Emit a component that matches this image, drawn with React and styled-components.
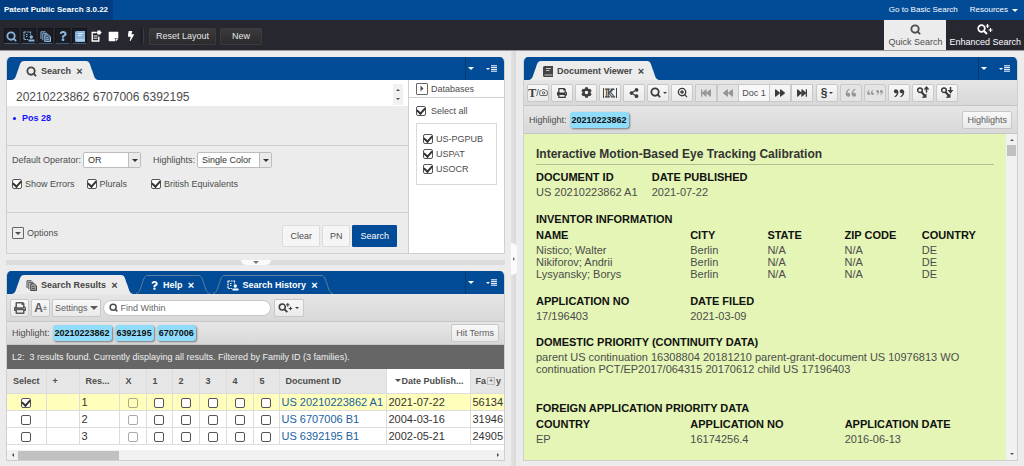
import React from 'react';
import styled, { createGlobalStyle, css } from 'styled-components';
import {
  FaBackward,
  FaBolt,
  FaCog,
  FaFastBackward,
  FaFastForward,
  FaForward,
  FaPrint,
  FaQuestion,
  FaShareAlt,
  FaStickyNote,
} from 'react-icons/fa';
import { RiDoubleQuotesL, RiDoubleQuotesR } from 'react-icons/ri';
import { Camera, Search, ZoomIn } from 'lucide-react';

const blue = '#024c97';
const line = '#cfcfcf';

const GlobalStyle = createGlobalStyle`
  * {
    box-sizing: border-box;
  }
  body {
    margin: 0;
    background: #ececec;
    color: #4c4c4c;
    font-family: 'Liberation Sans', Arial, sans-serif;
    font-size: 9px;
    line-height: 12px;
  }
  button,
  input,
  select,
  textarea {
    margin: 0;
    font: inherit;
    color: inherit;
  }
  svg {
    display: block;
    flex-shrink: 0;
  }
`;

const Page = styled.div`
  min-height: 100vh;
  display: flex;
  flex-direction: column;
`;

const TopBar = styled.header`
  height: 20px;
  display: flex;
  align-items: stretch;
  justify-content: space-between;
  background: ${blue};
  color: white;
  font-size: 8px;
`;

const Brand = styled.h1`
  margin: 0;
  padding: 0 5px 0 4px;
  display: flex;
  align-items: center;
  background: #013d80;
  font-size: 8px;
`;

const TopLinks = styled.nav`
  display: flex;
  align-items: center;
  gap: 12px;
  padding-right: 6px;
  a {
    display: flex;
    align-items: center;
    gap: 4px;
    color: inherit;
    text-decoration: none;
  }
`;

const Caret = styled.span`
  width: 0;
  height: 0;
  flex-shrink: 0;
  border: ${(p) => p.$size || 3}px solid transparent;
  border-bottom-width: 0;
  border-top-color: currentColor;
  ${(p) =>
    p.$up &&
    css`
      transform: rotate(180deg);
    `}
  ${(p) =>
    p.$right &&
    css`
      transform: rotate(-90deg);
    `}
  ${(p) =>
    p.$left &&
    css`
      transform: rotate(90deg);
    `}
`;

const MainBar = styled.div`
  height: 31px;
  display: flex;
  justify-content: space-between;
  background: #26272f;
  border-bottom: 1px solid #9b9b9d;
`;

const MainTools = styled.div`
  display: flex;
  align-items: center;
  gap: 2px;
  padding: 2px 4px 0;
`;

const PanelToggle = styled.button`
  width: 15px;
  height: 16px;
  padding: 0;
  display: flex;
  align-items: center;
  justify-content: center;
  border: 1px solid #14151a;
  border-bottom-color: #3f5872;
  background: #1b1d24;
  color: #89b4dc;
`;

const PlainTool = styled(PanelToggle)`
  border: 0;
  background: none;
  color: white;
`;

const Separator = styled.span`
  width: 4px;
  height: 16px;
  margin-right: 3px;
  border-right: 1px solid #3a3b40;
  background: #202127;
`;

const DarkButton = styled.button`
  height: 17px;
  margin-right: 2px;
  padding: 0 ${(p) => p.$pad || 6}px;
  border: 1px solid #3c3c3e;
  border-radius: 1px;
  background: linear-gradient(#3a3a3c, #2b2b2d);
  color: #e6e6e6;
`;

const Modes = styled.div`
  display: flex;
`;

const ModeButton = styled.button`
  padding: 4px ${(p) => (p.$active ? 4 : 3)}px 0;
  display: flex;
  flex-direction: column;
  align-items: center;
  gap: 1px;
  border: 0;
  background: ${(p) => (p.$active ? '#ececec' : 'none')};
  color: ${(p) => (p.$active ? '#4c4c4c' : 'white')};
`;

const Workspace = styled.main`
  flex: 1;
  display: grid;
  grid-template-columns: minmax(0, 499fr) 18px minmax(0, 495fr);
  padding: 6px 6px 5px;
`;

const Column = styled.div`
  display: flex;
  flex-direction: column;
`;

const Panel = styled.section`
  display: flex;
  flex-direction: column;
  flex: ${(p) => (p.$grow ? 1 : 'none')};
  min-height: 0;
  border: 1px solid ${line};
  border-top: 0;
  border-radius: 5px 5px 0 0;
  overflow: hidden;
`;

const PanelHead = styled.div`
  height: 23px;
  margin: 0 -1px;
  display: flex;
  align-items: stretch;
  justify-content: space-between;
  background: ${blue};
`;

const Tabs = styled.div`
  display: flex;
  align-items: flex-end;
  gap: 3px;
  padding-left: 6px;
`;

const TabBox = styled.div`
  height: 19px;
  display: flex;
  color: ${(p) => (p.$active ? '#444' : 'white')};
`;

const TabBody = styled.div`
  display: flex;
  align-items: center;
  gap: 4px;
  padding: 0 2px;
  border-top: 1px solid ${(p) => (p.$active ? '#ececec' : '#5e7f9f')};
  background: ${(p) => (p.$active ? '#ececec' : 'none')};
  font-weight: bold;
`;

const TabClose = styled.button`
  width: 9px;
  padding: 0;
  border: 0;
  background: none;
  font-weight: bold;
  font-size: 11px;
`;

const HeadTools = styled.div`
  display: flex;
  align-items: center;
  gap: 12px;
  padding: 0 8px 0 2px;
  border-left: 1px solid #02396f;
  color: white;
`;

const HeadMenu = styled.button`
  display: flex;
  align-items: center;
  gap: 1px;
  padding: 0;
  border: 0;
  background: none;
`;

const SplitterV = styled.div`
  margin: -6px 6px -5px;
  display: flex;
  align-items: center;
  justify-content: flex-end;
  background: linear-gradient(90deg, #e2e2e2, #dadada 80%, #ececec 80%);
`;

const SplitterH = styled.div`
  height: 17px;
  padding-top: 6px;
  display: flex;
  justify-content: center;
  align-items: flex-start;
  background: linear-gradient(#ececec 6px, #dcdcdc 6px, #dcdcdc 11px, #ececec 11px);
`;

const Grip = styled.button`
  padding: 0;
  display: flex;
  align-items: center;
  justify-content: center;
  border: 0;
  background: #fbfbfb;
  color: #777;
  width: ${(p) => (p.$vertical ? 6 : 30)}px;
  height: ${(p) => (p.$vertical ? 32 : 5)}px;
  border-radius: ${(p) => (p.$vertical ? '0 5px 5px 0' : '0 0 5px 5px')};
`;

/* search panel */

const SearchLayout = styled.div`
  display: grid;
  grid-template-columns: minmax(0, 1fr) 96px;
  min-height: 173px;
`;

const Form = styled.form`
  display: flex;
  flex-direction: column;
`;

const QueryRow = styled.div`
  display: flex;
  height: 26px;
  padding-right: 5px;
  background: white;
`;

const Query = styled.textarea`
  flex: 1;
  padding: 9px 9px 0;
  border: 0;
  outline: 0;
  resize: none;
  overflow: hidden;
  background: none;
  font-size: 12px;
  line-height: 16px;
`;

const Stepper = styled.div`
  width: 10px;
  margin: 4px 0 1px;
  padding: 5px 0;
  display: flex;
  flex-direction: column;
  align-items: center;
  justify-content: space-between;
  background: #f1f1f1;
`;

const Position = styled.div`
  height: 40px;
  padding: 6px;
  display: flex;
  align-items: flex-start;
  gap: 6px;
  border-bottom: 1px solid ${line};
  color: #1414ff;
  font-weight: bold;
  &::before {
    content: '';
    width: 3px;
    height: 3px;
    margin-top: 5px;
    border-radius: 50%;
    background: currentColor;
  }
`;

const Settings = styled.div`
  height: 67px;
  padding: 6px 5px 0;
  border-bottom: 1px solid ${line};
`;

const Fields = styled.div`
  display: flex;
  gap: 12px;
`;

const Field = styled.label`
  display: flex;
  align-items: center;
  gap: 2px;
  white-space: nowrap;
`;

const SelectBox = styled.span`
  width: ${(p) => p.$width}px;
  height: 16px;
  display: flex;
  align-items: stretch;
  border: 1px solid #bdbdbd;
  border-radius: 2px;
  background: white;
  color: #333;
  select {
    flex: 1;
    min-width: 0;
    padding: 0 4px;
    border: 0;
    appearance: none;
    background: none;
  }
`;

const SelectArrow = styled.span`
  width: 12px;
  display: flex;
  align-items: center;
  justify-content: center;
  border-left: 1px solid #bdbdbd;
  background: #ebebeb;
  pointer-events: none;
`;

const Checks = styled.div`
  display: flex;
  gap: 12px;
  margin-top: 10px;
  label:last-child {
    margin-left: 12px;
  }
`;

const CheckLabel = styled.label`
  display: flex;
  align-items: center;
  gap: ${(p) => p.$gap || 3}px;
  white-space: nowrap;
`;

const Check = styled.input.attrs({ type: 'checkbox' })`
  appearance: none;
  width: 10px;
  height: 10px;
  flex-shrink: 0;
  display: inline-flex;
  align-items: center;
  justify-content: center;
  border: 1px solid #555;
  border-radius: 2px;
  background: ${(p) => (p.disabled ? 'transparent' : 'white')};
  opacity: ${(p) => (p.disabled ? 0.5 : 1)};
  &:checked::after {
    content: '';
    width: 4px;
    height: 6px;
    margin-bottom: 2px;
    border: solid #333;
    border-width: 0 2px 2px 0;
    transform: rotate(42deg);
  }
`;

const FormFoot = styled.div`
  flex: 1;
  display: flex;
  align-items: center;
  justify-content: space-between;
  padding: 0 11px 0 5px;
`;

const OptionsToggle = styled.button`
  display: flex;
  align-items: center;
  gap: 3px;
  padding: 0;
  border: 0;
  background: none;
`;

const SquareCaret = styled.span`
  width: 12px;
  height: 12px;
  display: flex;
  align-items: center;
  justify-content: center;
  border: 1px solid #666;
  border-radius: 1px;
`;

const Actions = styled.div`
  display: flex;
  gap: 2px;
  padding-top: 5px;
`;

const ActionButton = styled.button`
  height: 22px;
  padding: 0 7px;
  border: 1px solid ${(p) => (p.$primary ? blue : '#dcdcdc')};
  border-radius: 1px;
  background: ${(p) => (p.$primary ? blue : '#f5f5f5')};
  color: ${(p) => (p.$primary ? 'white' : '#4c4c4c')};
`;

const Databases = styled.aside`
  border-left: 1px solid ${line};
  background: white;
`;

const DatabasesHead = styled(OptionsToggle)`
  width: 100%;
  height: 18px;
  padding: 0 7px;
  border-bottom: 1px solid ${line};
`;

const DatabasesBody = styled.div`
  padding: 7px 7px 0;
`;

const DatabaseList = styled.fieldset`
  min-width: 0;
  height: 62px;
  margin: 6px 0 0;
  padding: 7px 6px;
  display: flex;
  flex-direction: column;
  justify-content: center;
  gap: 3px;
  border: 1px solid #d9d9d9;
`;

/* shared toolbar parts */

const Strip = styled.div`
  height: ${(p) => p.$height}px;
  display: flex;
  align-items: center;
  gap: ${(p) => p.$gap || 2}px;
  padding: 0 ${(p) => p.$pad || 3}px;
  border-bottom: 1px solid #c6c6c6;
  background: linear-gradient(#e6e6e6, #d8d8d8);
`;

const ToolButton = styled.button`
  min-width: ${(p) => p.$width || 22}px;
  height: 18px;
  padding: 0 ${(p) => p.$pad || 0}px;
  display: flex;
  align-items: center;
  justify-content: center;
  gap: ${(p) => (p.$tight ? 0 : 2)}px;
  border: 1px solid #c8c8c8;
  border-radius: 2px;
  background: linear-gradient(#f8f8f8, #eaeaea);
  color: ${(p) => (p.$soft ? '#5c5c5c' : '#3c3c3c')};
  &:disabled {
    background: #e4e4e4;
    color: #979797;
  }
`;

const ButtonGroup = styled.div`
  display: flex;
  margin-right: 1px;
  ${ToolButton} {
    border-radius: 0;
  }
`;

const DocNumber = styled.span`
  width: 30px;
  display: flex;
  align-items: center;
  justify-content: center;
  border: solid #c8c8c8;
  border-width: 1px 0;
  background: #f8f8f8;
`;

const Letter = styled.span`
  font-size: 12px;
  font-weight: bold;
`;

const SerifLetter = styled(Letter)`
  font-family: 'Liberation Serif', serif;
`;

const KwicLetter = styled(SerifLetter)`
  padding: 0 1px;
  border: solid #444;
  border-width: 0 1px;
  line-height: 10px;
  color: #f4f4f4;
  -webkit-text-stroke: 1px #444;
`;

const Tiny = styled.span`
  font-size: 7px;
`;

const FindBox = styled.label`
  width: 168px;
  height: 16px;
  display: flex;
  align-items: center;
  gap: 3px;
  margin-right: 1px;
  padding: 0 5px;
  border: 1px solid #c8c8c8;
  border-radius: 8px;
  background: white;
  input {
    flex: 1;
    min-width: 0;
    padding: 0;
    border: 0;
    outline: 0;
    background: none;
  }
  input::placeholder {
    color: #666;
    opacity: 1;
  }
`;

const Chip = styled.button`
  height: 16px;
  padding: 0 2px;
  border: 0;
  border-radius: 3px;
  background: #8fdcfb;
  box-shadow: 1px 1px 2px rgba(0, 0, 0, 0.45);
  color: #111;
  font-weight: bold;
`;

const Spacer = styled.span`
  flex: 1;
`;

/* results */

const Summary = styled.p`
  height: 24px;
  margin: 0;
  padding: 0 5px;
  display: flex;
  align-items: center;
  background: #666;
  color: #eee;
  white-space: pre;
`;

const GridScroll = styled.div`
  flex: 1;
  overflow: hidden;
  background: white;
`;

const Grid = styled.table`
  width: 100%;
  table-layout: fixed;
  border-collapse: collapse;
  th,
  td {
    overflow: hidden;
    border-right: 1px solid #dcdcdc;
    border-bottom: 1px solid #dcdcdc;
    white-space: nowrap;
  }
  th:last-child,
  td:last-child {
    border-right: 0;
  }
  th {
    height: 24px;
    padding: 0 6px;
    background: #e6e6e6;
    text-align: left;
  }
  th:nth-child(11) {
    padding: 0 2px 0 8px;
    background: white;
  }
  th:last-child {
    padding: 0 0 0 5px;
  }
  td {
    height: 17px;
    padding: 0 2px;
    color: #333;
    font-size: 11px;
    line-height: 14px;
  }
`;

const HeadFlex = styled.span`
  display: flex;
  align-items: center;
  gap: 1px;
`;

const ResultRow = styled.tr`
  background: ${(p) => (p.$selected ? '#ffffbb' : 'white')};
`;

const CheckCell = styled.td`
  text-align: center;
  ${Check} {
    vertical-align: middle;
  }
`;

const DocLink = styled.a`
  color: #20619f;
  text-decoration: none;
`;

const PlusBox = styled.span`
  width: 8px;
  height: 8px;
  border: 1px solid #bbb;
  font-size: 8px;
  font-weight: normal;
  line-height: 6px;
  text-align: center;
`;

const ScrollX = styled.div`
  height: 10px;
  display: flex;
  align-items: center;
  gap: 3px;
  padding: 0 4px;
  background: #f1f1f1;
  color: #444;
`;

const ThumbX = styled.span`
  width: 101px;
  height: 9px;
  background: #c1c1c1;
`;

/* document viewer */

const DocArea = styled.div`
  flex: 1;
  display: flex;
  background: #e4f5b5;
`;

const Doc = styled.article`
  flex: 1;
  padding: 12px 7px 14px 12px;
  font-size: 11px;
`;

const DocTitle = styled.h2`
  margin: 0 5px 5px 0;
  padding-bottom: 2px;
  border-bottom: 1px solid #b3bf90;
  color: #333;
  font-size: 12px;
  line-height: 16px;
`;

const DocHeading = styled.h3`
  margin: 0 0 2px;
  color: #111;
  font-size: 11px;
  line-height: 14px;
`;

const DocBlock = styled.div`
  margin-bottom: 26px;
  p {
    margin: 0;
  }
`;

const DocTable = styled.table`
  width: 100%;
  table-layout: fixed;
  border-collapse: collapse;
  margin-bottom: ${(p) => p.$space || 0}px;
  th {
    padding: 0 0 2px;
    color: #111;
    text-align: left;
    line-height: 14px;
  }
  td {
    padding: 0;
  }
`;

const ScrollY = styled.div`
  width: 11px;
  display: flex;
  flex-direction: column;
  align-items: center;
  gap: 4px;
  padding: 5px 0;
  background: #f1f1f1;
  color: #555;
`;

const ThumbY = styled.span`
  width: 9px;
  height: 11px;
  background: #c1c1c1;
`;

const SearchSpark = ({ size = 11 }) => (
  <svg width={size + 5} height={size} viewBox="0 0 16 11" fill="none" stroke="currentColor">
    <circle cx="4.5" cy="4.5" r="3.3" strokeWidth="1.7" />
    <path d="M7 7l3 3" strokeWidth="2" />
    <path d="M10.5 0v4M8.7 2h3.6M13.5 4v4M11.5 6h4" strokeWidth="1.2" />
  </svg>
);

const SearchArrow = ({ down }) => (
  <svg width="14" height="13" viewBox="0 0 14 13" fill="none" stroke="currentColor">
    <circle cx="4" cy="4.2" r="2.3" strokeWidth="1.5" />
    <path d="M5.5 6l3.5 4" strokeWidth="2" />
    <path d="M5.5 11.8h5V7.500z" fill="currentColor" stroke="none" />
    <path d="M10.5 1v5.500" strokeWidth="1.5" />
    <path d={down ? 'M7.500 4h6l-3 3.500z' : 'M7.500 3.500h6L10.500 0z'} fill="currentColor" stroke="none" />
  </svg>
);

const PagesIcon = () => (
  <svg width="11" height="11" viewBox="0 0 11 11" fill="none" stroke="currentColor">
    <path d="M1 8V.8h4.5M2.8 9.3V2.3h4.5" />
    <path d="M4.7 3.7h3.6L10.5 6v4.5H4.7z" fill="currentColor" fillOpacity="0.45" />
    <path d="M6 6.5h2.5M6 8.5h3" strokeWidth="0.8" />
  </svg>
);

const HistoryIcon = () => (
  <svg width="12" height="11" viewBox="0 0 12 11" fill="none" stroke="currentColor">
    <path d="M1 .8v7.7h4M1 1h6.5v2.500" strokeDasharray="2 0.7" strokeWidth="1.2" />
    <path d="M3 3.5h1.5M3 5.5h1.5" />
    <circle cx="8.300" cy="6" r="1.700" fill="currentColor" stroke="none" />
    <path d="M5.5 9.500h6" strokeWidth="2" />
  </svg>
);

const BookIcon = () => (
  <svg width="10" height="11" viewBox="0 0 10 11">
    <path d="M1.5 0H10v11H1.5A1.5 1.5 0 0 1 0 9.5V1.5A1.5 1.5 0 0 1 1.5 0z" fill="currentColor" />
    <path d="M3 2.5h5M3 4.5h3.5M1.5 9h8" stroke="#fff" strokeOpacity="0.7" />
  </svg>
);

const NotePlusIcon = () => (
  <svg width="11" height="12" viewBox="0 0 11 12" fill="none" stroke="currentColor">
    <path d="M5.5 2.5H1.2v8.5h6.6V6.5" strokeWidth="1.4" />
    <path d="M2.5 6h4M2.5 8.2h4" />
    <path d="M8 0v5M5.5 2.5h5M6.3.8l3.4 3.4M9.7.8L6.3 4.2" strokeWidth="1.1" />
  </svg>
);

const ListIcon = () => (
  <svg width="6" height="7" viewBox="0 0 6 7" stroke="currentColor">
    <path d="M0 .8h6M0 2.6h6M0 4.4h6M0 6.2h6" />
  </svg>
);

const TabEdge = ({ active, right }) => (
  <svg width="12" height="19" viewBox="0 0 12 19">
    <g transform={right ? 'translate(12 0) scale(-1 1)' : undefined}>
      {active && <path d="M0 19C4 18 4 14 6 9C8 4 8 0 12 0V19Z" fill="#ececec" />}
      {!active && <path d="M0 18.5C4 18 4 14 6 9C8 4 8 .5 12 .5" fill="none" stroke="#5e7f9f" />}
    </g>
  </svg>
);

const Tab = ({ icon, label, active }) => (
  <TabBox $active={active}>
    <TabEdge active={active} />
    <TabBody $active={active}>
      {icon}
      {label}
      <TabClose aria-label={`Close ${label}`}>×</TabClose>
    </TabBody>
    <TabEdge active={active} right />
  </TabBox>
);

const PanelTools = () => (
  <HeadTools>
    <HeadMenu aria-label="Panel menu">
      <Caret />
    </HeadMenu>
    <HeadMenu aria-label="Tab list">
      <Caret $size={2} />
      <ListIcon />
    </HeadMenu>
  </HeadTools>
);

const results = [
  { no: 1, id: 'US 20210223862 A1', date: '2021-07-22', family: '56134', selected: true },
  { no: 2, id: 'US 6707006 B1', date: '2004-03-16', family: '31946' },
  { no: 3, id: 'US 6392195 B1', date: '2002-05-21', family: '24905' },
];

const gridWidths = [39, 33, 40, 27, 26, 27, 27, 27, 26, 107, 84];
const tags = ['1', '2', '3', '4', '5'];
const inventors = ['Nistico; Walter', 'Nikiforov; Andrii', 'Lysyansky; Borys'];

function SearchPanel() {
  return (
    <Panel>
      <PanelHead>
        <Tabs>
          <Tab active label="Search" icon={<Search size={11} strokeWidth={4} />} />
        </Tabs>
        <PanelTools />
      </PanelHead>
      <SearchLayout>
        <Form onSubmit={(e) => e.preventDefault()}>
          <QueryRow>
            <Query aria-label="Query" defaultValue="20210223862 6707006 6392195" />
            <Stepper>
              <Caret $size={2} $up />
              <Caret $size={2} />
            </Stepper>
          </QueryRow>
          <Position>Pos 28</Position>
          <Settings>
            <Fields>
              <Field>
                Default Operator:
                <SelectBox $width={58}>
                  <select defaultValue="OR">
                    <option>OR</option>
                    <option>AND</option>
                  </select>
                  <SelectArrow>
                    <Caret />
                  </SelectArrow>
                </SelectBox>
              </Field>
              <Field>
                Highlights:
                <SelectBox $width={75}>
                  <select defaultValue="Single Color">
                    <option>Single Color</option>
                    <option>Multi Color</option>
                  </select>
                  <SelectArrow>
                    <Caret />
                  </SelectArrow>
                </SelectBox>
              </Field>
            </Fields>
            <Checks>
              <CheckLabel>
                <Check defaultChecked />
                Show Errors
              </CheckLabel>
              <CheckLabel>
                <Check defaultChecked />
                Plurals
              </CheckLabel>
              <CheckLabel>
                <Check defaultChecked />
                British Equivalents
              </CheckLabel>
            </Checks>
          </Settings>
          <FormFoot>
            <OptionsToggle type="button">
              <SquareCaret>
                <Caret />
              </SquareCaret>
              Options
            </OptionsToggle>
            <Actions>
              <ActionButton type="button">Clear</ActionButton>
              <ActionButton type="button">PN</ActionButton>
              <ActionButton $primary>Search</ActionButton>
            </Actions>
          </FormFoot>
        </Form>
        <Databases>
          <DatabasesHead type="button">
            <SquareCaret>
              <Caret $right />
            </SquareCaret>
            Databases
          </DatabasesHead>
          <DatabasesBody>
            <CheckLabel $gap={5}>
              <Check defaultChecked />
              Select all
            </CheckLabel>
            <DatabaseList>
              {['US-PGPUB', 'USPAT', 'USOCR'].map((name) => (
                <CheckLabel key={name}>
                  <Check defaultChecked />
                  {name}
                </CheckLabel>
              ))}
            </DatabaseList>
          </DatabasesBody>
        </Databases>
      </SearchLayout>
    </Panel>
  );
}

function ResultsPanel() {
  return (
    <Panel $grow>
      <PanelHead>
        <Tabs>
          <Tab active label="Search Results" icon={<PagesIcon />} />
          <Tab label="Help" icon={<FaQuestion size={9} />} />
          <Tab label="Search History" icon={<HistoryIcon />} />
        </Tabs>
        <PanelTools />
      </PanelHead>
      <Strip $height={28}>
        <ToolButton $soft $width={19} aria-label="Print">
          <FaPrint size={12} />
        </ToolButton>
        <ToolButton $soft $tight $width={19} aria-label="Text size">
          <Letter>A</Letter>
          <Tiny>±</Tiny>
        </ToolButton>
        <ToolButton $soft $pad={2}>
          Settings
          <Caret $size={4} />
        </ToolButton>
        <FindBox>
          <Search size={9} strokeWidth={4} />
          <input aria-label="Find within" placeholder="Find Within" />
        </FindBox>
        <ToolButton $width={30} aria-label="Enhanced search">
          <SearchSpark size={10} />
          <Caret $size={2} />
        </ToolButton>
      </Strip>
      <Strip $height={23} $gap={3} $pad={5}>
        Highlight:
        <Chip>20210223862</Chip>
        <Chip>6392195</Chip>
        <Chip>6707006</Chip>
        <Spacer />
        <ToolButton $soft $pad={4}>
          Hit Terms
        </ToolButton>
      </Strip>
      <Summary>L2:  3 results found. Currently displaying all results. Filtered by Family ID (3 families).</Summary>
      <GridScroll>
        <Grid>
          <colgroup>
            {gridWidths.map((width, i) => (
              <col key={i} style={{ width }} />
            ))}
            <col />
          </colgroup>
          <thead>
            <tr>
              <th>Select</th>
              <th>+</th>
              <th>Res...</th>
              <th>X</th>
              {tags.map((tag) => (
                <th key={tag}>{tag}</th>
              ))}
              <th>Document ID</th>
              <th>
                <HeadFlex>
                  <Caret />
                  Date Publish...
                </HeadFlex>
              </th>
              <th>
                <HeadFlex>
                  Fa
                  <PlusBox>+</PlusBox>y
                </HeadFlex>
              </th>
            </tr>
          </thead>
          <tbody>
            {results.map((row) => (
              <ResultRow key={row.no} $selected={row.selected}>
                <CheckCell>
                  <Check aria-label={`Select ${row.id}`} defaultChecked={row.selected} />
                </CheckCell>
                <td />
                <td>{row.no}</td>
                <CheckCell>
                  <Check aria-label="X" disabled />
                </CheckCell>
                {tags.map((tag) => (
                  <CheckCell key={tag}>
                    <Check aria-label={`Tag ${tag}`} />
                  </CheckCell>
                ))}
                <td>
                  <DocLink href="#">{row.id}</DocLink>
                </td>
                <td>{row.date}</td>
                <td>{row.family}</td>
              </ResultRow>
            ))}
          </tbody>
        </Grid>
      </GridScroll>
      <ScrollX>
        <Caret $size={2} $left />
        <ThumbX />
        <Spacer />
        <Caret $size={2} $right />
      </ScrollX>
    </Panel>
  );
}

function DocumentPanel() {
  return (
    <Panel $grow>
      <PanelHead>
        <Tabs>
          <Tab active label="Document Viewer" icon={<BookIcon />} />
        </Tabs>
        <PanelTools />
      </PanelHead>
      <Strip $height={26}>
        <ToolButton $tight aria-label="Toggle text and image">
          <SerifLetter>T</SerifLetter>/<Camera size={9} />
        </ToolButton>
        <ToolButton aria-label="Print">
          <FaPrint size={10} />
        </ToolButton>
        <ToolButton aria-label="Preferences">
          <FaCog size={11} />
        </ToolButton>
        <ToolButton aria-label="KWIC">
          <KwicLetter>K</KwicLetter>
        </ToolButton>
        <ToolButton aria-label="Share">
          <FaShareAlt size={10} />
        </ToolButton>
        <ToolButton aria-label="Zoom">
          <Search size={11} strokeWidth={4} />
          <Caret $size={2} />
        </ToolButton>
        <ToolButton aria-label="Zoom in">
          <ZoomIn size={11} strokeWidth={3} />
        </ToolButton>
        <ButtonGroup>
          <ToolButton disabled aria-label="First">
            <FaFastBackward size={10} />
          </ToolButton>
          <ToolButton disabled aria-label="Previous">
            <FaBackward size={10} />
          </ToolButton>
          <DocNumber>Doc 1</DocNumber>
          <ToolButton aria-label="Next">
            <FaForward size={10} />
          </ToolButton>
          <ToolButton aria-label="Last">
            <FaFastForward size={10} />
          </ToolButton>
        </ButtonGroup>
        <ToolButton aria-label="Section">
          <Letter>§</Letter>
          <Caret $size={2} />
        </ToolButton>
        <ToolButton disabled aria-label="Previous quote">
          <RiDoubleQuotesL size={14} />
        </ToolButton>
        <ToolButton disabled $tight aria-label="Quote">
          <RiDoubleQuotesL size={9} />
          <RiDoubleQuotesR size={9} />
        </ToolButton>
        <ToolButton aria-label="Next quote">
          <RiDoubleQuotesR size={14} />
        </ToolButton>
        <ToolButton aria-label="Previous hit">
          <SearchArrow />
        </ToolButton>
        <ToolButton aria-label="Next hit">
          <SearchArrow down />
        </ToolButton>
      </Strip>
      <Strip $height={28} $gap={3} $pad={5}>
        Highlight:
        <Chip>20210223862</Chip>
        <Spacer />
        <ToolButton $soft $pad={4}>
          Highlights
        </ToolButton>
      </Strip>
      <DocArea>
        <Doc>
          <DocTitle>Interactive Motion-Based Eye Tracking Calibration</DocTitle>
          <DocTable $space={14}>
            <colgroup>
              <col style={{ width: '25%' }} />
              <col />
            </colgroup>
            <thead>
              <tr>
                <th>DOCUMENT ID</th>
                <th>DATE PUBLISHED</th>
              </tr>
            </thead>
            <tbody>
              <tr>
                <td>US 20210223862 A1</td>
                <td>2021-07-22</td>
              </tr>
            </tbody>
          </DocTable>
          <DocHeading>INVENTOR INFORMATION</DocHeading>
          <DocTable $space={14}>
            <colgroup>
              <col style={{ width: '33.3%' }} />
              <col span="4" />
            </colgroup>
            <thead>
              <tr>
                <th>NAME</th>
                <th>CITY</th>
                <th>STATE</th>
                <th>ZIP CODE</th>
                <th>COUNTRY</th>
              </tr>
            </thead>
            <tbody>
              {inventors.map((name) => (
                <tr key={name}>
                  <td>{name}</td>
                  <td>Berlin</td>
                  <td>N/A</td>
                  <td>N/A</td>
                  <td>DE</td>
                </tr>
              ))}
            </tbody>
          </DocTable>
          <DocTable $space={13}>
            <colgroup>
              <col style={{ width: '33.3%' }} />
              <col />
            </colgroup>
            <thead>
              <tr>
                <th>APPLICATION NO</th>
                <th>DATE FILED</th>
              </tr>
            </thead>
            <tbody>
              <tr>
                <td>17/196403</td>
                <td>2021-03-09</td>
              </tr>
            </tbody>
          </DocTable>
          <DocBlock>
            <DocHeading>DOMESTIC PRIORITY (CONTINUITY DATA)</DocHeading>
            <p>
              parent US continuation 16308804 20181210 parent-grant-document US 10976813 WO continuation
              PCT/EP2017/064315 20170612 child US 17196403
            </p>
          </DocBlock>
          <DocHeading>FOREIGN APPLICATION PRIORITY DATA</DocHeading>
          <DocTable>
            <thead>
              <tr>
                <th>COUNTRY</th>
                <th>APPLICATION NO</th>
                <th>APPLICATION DATE</th>
              </tr>
            </thead>
            <tbody>
              <tr>
                <td>EP</td>
                <td>16174256.4</td>
                <td>2016-06-13</td>
              </tr>
            </tbody>
          </DocTable>
        </Doc>
        <ScrollY>
          <Caret $size={2} $up />
          <ThumbY />
          <Spacer />
          <Caret $size={2} />
        </ScrollY>
      </DocArea>
    </Panel>
  );
}

function App() {
  return (
    <Page>
      <GlobalStyle />
      <TopBar>
        <Brand>Patent Public Search 3.0.22</Brand>
        <TopLinks>
          <a href="#">Go to Basic Search</a>
          <a href="#">
            Resources
            <Caret />
          </a>
        </TopLinks>
      </TopBar>
      <MainBar>
        <MainTools>
          <PanelToggle aria-label="Search">
            <Search size={11} strokeWidth={4} />
          </PanelToggle>
          <PanelToggle aria-label="Search history">
            <HistoryIcon />
          </PanelToggle>
          <PanelToggle aria-label="Search results">
            <PagesIcon />
          </PanelToggle>
          <PanelToggle aria-label="Help">
            <FaQuestion size={10} />
          </PanelToggle>
          <PanelToggle aria-label="Document viewer">
            <BookIcon />
          </PanelToggle>
          <PlainTool aria-label="Tagged documents">
            <NotePlusIcon />
          </PlainTool>
          <PlainTool aria-label="Notes">
            <FaStickyNote size={11} />
          </PlainTool>
          <PlainTool aria-label="Shortcuts">
            <FaBolt size={10} />
          </PlainTool>
          <Separator />
          <DarkButton>Reset Layout</DarkButton>
          <DarkButton $pad={11}>New</DarkButton>
        </MainTools>
        <Modes>
          <ModeButton $active>
            <Search size={11} strokeWidth={4} />
            Quick Search
          </ModeButton>
          <ModeButton>
            <SearchSpark />
            Enhanced Search
          </ModeButton>
        </Modes>
      </MainBar>
      <Workspace>
        <Column>
          <SearchPanel />
          <SplitterH>
            <Grip aria-label="Collapse search panel">
              <Caret />
            </Grip>
          </SplitterH>
          <ResultsPanel />
        </Column>
        <SplitterV>
          <Grip $vertical aria-label="Collapse left column">
            <Caret $size={2} $right />
          </Grip>
        </SplitterV>
        <Column>
          <DocumentPanel />
        </Column>
      </Workspace>
    </Page>
  );
}

export default App;
